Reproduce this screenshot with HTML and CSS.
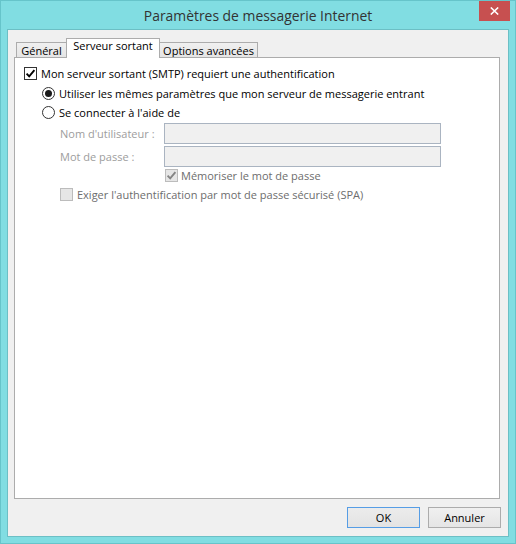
FILE: index.html
```html
<!DOCTYPE html>
<html lang="fr">
<head>
<meta charset="utf-8">
<title>Paramètres de messagerie Internet</title>
<link rel="stylesheet" href="styles.css">
</head>
<body>
<div class="window">
  <div class="titlebar">
    <div class="tb-side"></div>
    <div class="title">Paramètres de messagerie Internet</div>
    <div class="tb-side tb-right">
      <div class="close" aria-label="Fermer">
        <svg width="9" height="8" viewBox="0 0 9 8"><path d="M0.8 0.5 L8.2 7.5 M8.2 0.5 L0.8 7.5" stroke="#fff" stroke-width="1.6" fill="none"/></svg>
      </div>
    </div>
  </div>
  <div class="client">
    <div class="tabs">
      <div class="tab tab-general">Général</div>
      <div class="tab tab-selected">Serveur sortant</div>
      <div class="tab tab-options">Options avancées</div>
    </div>
    <div class="panel">
      <div class="row row-auth">
        <span class="cb checked"><svg width="11" height="11" viewBox="0 0 11 11"><path d="M1.6 5.6 L4.2 8.3 L9.4 2.2" stroke="#000" stroke-width="1.9" fill="none"/></svg></span>
        <span class="lbl">Mon serveur sortant (SMTP) requiert une authentification</span>
      </div>
      <div class="row row-radio1">
        <span class="radio checked"><span class="dot"></span></span>
        <span class="lbl">Utiliser les mêmes paramètres que mon serveur de messagerie entrant</span>
      </div>
      <div class="row row-radio2">
        <span class="radio"></span>
        <span class="lbl">Se connecter à l'aide de</span>
      </div>
      <div class="field field-user">
        <span class="field-lbl">Nom d'utilisateur :</span>
        <span class="input"></span>
      </div>
      <div class="field field-pass">
        <span class="field-lbl">Mot de passe :</span>
        <span class="input"></span>
      </div>
      <div class="row row-remember">
        <span class="cb disabled"><svg width="11" height="11" viewBox="0 0 11 11"><path d="M1.6 5.6 L4.2 8.3 L9.4 2.2" stroke="#858585" stroke-width="1.9" fill="none"/></svg></span>
        <span class="lbl lbl-disabled lbl-remember">Mémoriser le mot de passe</span>
      </div>
      <div class="row row-spa">
        <span class="cb disabled"></span>
        <span class="lbl lbl-disabled">Exiger l'authentification par mot de passe sécurisé (SPA)</span>
      </div>
    </div>
    <div class="buttons">
      <div class="btn btn-default">OK</div>
      <div class="btn">Annuler</div>
    </div>
  </div>
</div>
</body>
</html>
```

FILE: styles.css
```css
* { box-sizing: border-box; }

html, body {
  margin: 0;
  padding: 0;
  background: #81dde2;
}

body {
  font-family: "Open Sans", "Noto Sans", sans-serif;
  font-size: 11px;
  color: #000;
}

.window {
  width: 516px;
  height: 544px;
  background: #81dde2;
  border: 1px solid #66c4ca;
  padding: 0 6px 6px 6px;
  display: flex;
  flex-direction: column;
}

.titlebar {
  height: 28px;
  display: grid;
  grid-template-columns: 1fr auto 1fr;
  align-items: start;
}

.title {
  font-size: 13.9px;
  color: #333;
  padding-top: 5px;
  white-space: nowrap;
}

.tb-right {
  display: flex;
  justify-content: flex-end;
  margin-right: -1px;
}

.close {
  width: 31px;
  height: 20px;
  background: #c75050;
  display: flex;
  align-items: center;
  justify-content: center;
}

.client {
  flex: 1;
  background: #f0f0f0;
  border: 1px solid #6cbfc5;
  padding: 8px 8px 8px 6px;
  display: flex;
  flex-direction: column;
}

.tabs {
  height: 19px;
  display: flex;
  align-items: flex-end;
  padding-left: 2px;
}

.tab {
  height: 15px;
  border: 1px solid #acacac;
  border-bottom: none;
  background: linear-gradient(#f0f0f0, #e5e5e5);
  line-height: 15px;
  text-align: center;
  white-space: nowrap;
}

.tab-general { width: 51px; }

.tab-selected {
  width: 94px;
  height: 20px;
  margin-left: -1px;
  margin-bottom: -1px;
  background: #fff;
  line-height: 14px;
  position: relative;
  z-index: 1;
}

.tab-options {
  width: 99px;
  margin-left: -1px;
}

.panel {
  height: 442px;
  background: #fff;
  border: 1px solid #acacac;
  padding: 7px 0 0 9px;
}

.row {
  height: 17px;
  display: flex;
  align-items: center;
  white-space: nowrap;
}

.row-radio1 { margin-top: 3px; padding-left: 18px; }
.row-radio2 { margin-top: 2px; padding-left: 18px; }
.row-remember { margin-top: 0; padding-left: 141px; }
.row-spa { margin-top: 2px; padding-left: 36px; }

.cb {
  width: 13px;
  height: 13px;
  flex: none;
  border: 1px solid #333;
  background: #fff;
  display: flex;
  align-items: center;
  justify-content: center;
  margin-right: 4px;
}

.cb.disabled {
  border-color: #bcbcbc;
  background: #e6e6e6;
}

.radio {
  width: 13px;
  height: 13px;
  flex: none;
  border: 1px solid #333;
  border-radius: 50%;
  background: #fff;
  display: flex;
  align-items: center;
  justify-content: center;
  margin-right: 4px;
}

.radio .dot {
  width: 7px;
  height: 7px;
  border-radius: 50%;
  background: #1a1a1a;
}

.lbl-disabled { color: #6d6d6d; }
.lbl-remember { margin-left: -1px; }

.field {
  height: 21px;
  display: flex;
  align-items: center;
  padding-left: 36px;
}

.field-user { margin-top: 2px; }
.field-pass { margin-top: 2px; }

.field-lbl {
  width: 104px;
  flex: none;
  color: #9d9d9d;
  white-space: nowrap;
}

.input {
  width: 277px;
  height: 21px;
  border: 1px solid #aab4c1;
  background: #f0f0f0;
}

.buttons {
  margin-top: 8px;
  margin-right: -1px;
  display: flex;
  justify-content: flex-end;
  gap: 8px;
}

.btn {
  width: 73px;
  height: 21px;
  border: 1px solid #acacac;
  background: linear-gradient(#f0f0f0, #e5e5e5);
  display: flex;
  align-items: center;
  justify-content: center;
}

.btn-default {
  border-color: #569de5;
  background: linear-gradient(#ececec, #e3e3e3);
}
```
